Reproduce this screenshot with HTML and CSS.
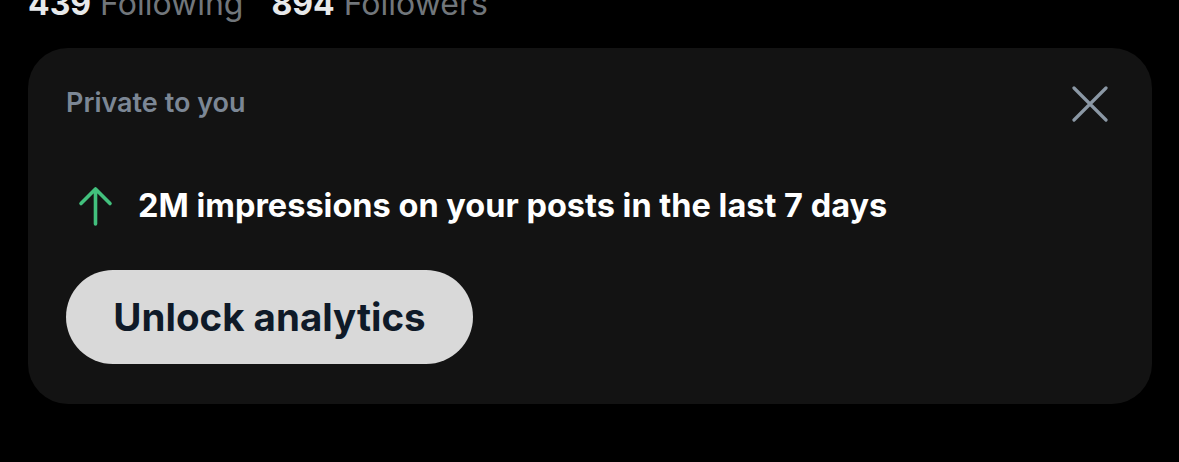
FILE: index.html
```html
<!DOCTYPE html>
<html>
<head>
<meta charset="utf-8">
<link rel="stylesheet" href="styles.css">
</head>
<body>
<div class="page">
  <div class="stats"><span class="num">439</span> <span class="lbl">Following</span><span class="num second">894</span> <span class="lbl">Followers</span></div>
  <div class="card">
    <div class="card-head">
      <div class="private">Private to you</div>
      <svg class="close" width="36" height="36" viewBox="0 0 36 36">
        <path d="M2 2 L34 34 M34 2 L2 34" stroke="#8b98a5" stroke-width="3.2" stroke-linecap="round" fill="none"/>
      </svg>
    </div>
    <div class="insight">
      <svg class="arrow" width="35" height="40" viewBox="0 0 35 40">
        <path d="M17.5 38 V3 M3 17.5 L17.5 3 L32 17.5" stroke="#42c07d" stroke-width="3.6" stroke-linecap="round" stroke-linejoin="round" fill="none"/>
      </svg>
      <span class="insight-text">2M impressions on your posts in the last 7 days</span>
    </div>
    <button class="unlock">Unlock analytics</button>
  </div>
</div>
</body>
</html>
```
FILE: styles.css
```css
html, body {
  margin: 0;
  padding: 0;
  background: #000;
}
body {
  font-family: Inter, "Noto Sans", sans-serif;
  width: 1179px;
  height: 462px;
  overflow: hidden;
}
.page {
  padding: 0 27px 0 28px;
}
.stats {
  height: 64px;
  margin-top: -16px;
  font-size: 32px;
  line-height: 40px;
  white-space: nowrap;
}
.num {
  color: #e7e9ea;
  font-weight: 700;
}
.second {
  margin-left: 28px;
}
.lbl {
  color: #71767b;
}
.card {
  background: #131313;
  border-radius: 40px;
  height: 356px;
  box-sizing: border-box;
  padding: 39px 44px 0 38px;
}
.card-head {
  display: flex;
  justify-content: space-between;
  align-items: flex-start;
  height: 99px;
}
.private {
  color: #7c8795;
  font-size: 27px;
  font-weight: 600;
  line-height: 32px;
}
.close {
  margin-top: -1px;
}
.insight {
  display: flex;
  align-items: center;
  gap: 25px;
  margin-left: 12px;
  height: 40px;
}
.arrow {
  flex: none;
}
.insight-text {
  color: #ffffff;
  font-size: 32.5px;
  line-height: 40px;
  font-weight: 700;
}
.unlock {
  display: block;
  margin-top: 44px;
  height: 94px;
  width: 407px;
  border: none;
  border-radius: 47px;
  background: #d9d9d9;
  color: #0f1a28;
  font-family: Inter, "Noto Sans", sans-serif;
  font-size: 38.5px;
  font-weight: 700;
  padding: 0;
}
```
